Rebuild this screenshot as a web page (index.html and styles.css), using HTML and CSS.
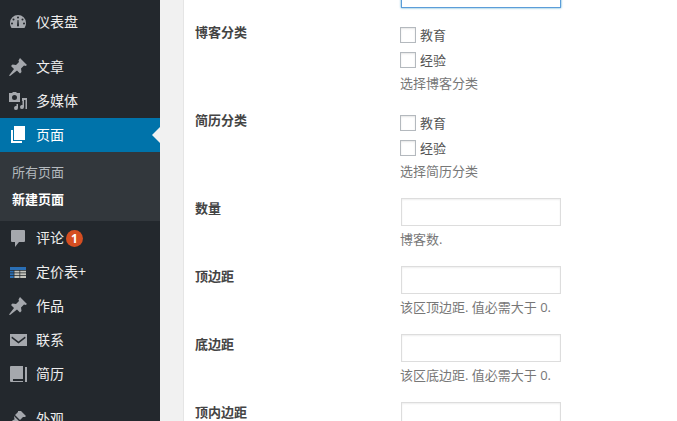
FILE: index.html
```html
<!DOCTYPE html>
<html lang="zh">
<head>
<meta charset="utf-8">
<title>新建页面</title>
<link rel="stylesheet" href="styles.css">
</head>
<body>
<div class="app">
  <nav class="sidebar">
    <a class="item first"><svg class="ico" viewBox="0 0 20 20"><path d="M2 11a8 8 0 0 1 16 0c0 2-.6 3.500-1.500 5h-13C2.600 14.500 2 13 2 11zM10 4.500a1 1 0 1 0 0 2 1 1 0 0 0 0-2zM5.500 6.500a1 1 0 1 0 0 2 1 1 0 0 0 0-2zM14.500 6.500a1 1 0 1 0 0 2 1 1 0 0 0 0-2zM4 10.500a1 1 0 1 0 0 2 1 1 0 0 0 0-2zM16 10.500a1 1 0 1 0 0 2 1 1 0 0 0 0-2zM9.500 8l-.5 5.500a1 1 0 1 0 2 0L10.500 8z" fill-rule="evenodd"/></svg><span>仪表盘</span></a>
    <a class="item gap"><svg class="ico" viewBox="0 0 20 20"><path d="M12 1l7 7-1.500 1-1.500-.5-3 3 .5 3.500-1.500 1.500-3-3L2 19l-1-.500L6 12 3 9l1.500-1.500 3.500.5 3-3-.5-1.500z"/></svg><span>文章</span></a>
    <a class="item"><svg class="ico" viewBox="0 0 20 20"><path d="M1 2h3l1-1h3l1 1h3v9H1zM6.500 4a2.500 2.500 0 1 0 0 5 2.500 2.500 0 0 0 0-5zM14 7h5v11h-1.500V9H16v7a2 2 0 1 1-1.500-1.900V10H14zM10 13v4a2 2 0 1 1-1.500-1.900V13z" fill-rule="evenodd"/></svg><span>多媒体</span></a>
    <a class="item current"><svg class="ico" viewBox="0 0 20 20"><path d="M6 1h11v14H6z"/><path d="M3 5h2v11h9v2H3z"/></svg><span>页面</span></a>
    <div class="submenu">
      <a class="sub">所有页面</a>
      <a class="sub on">新建页面</a>
    </div>
    <a class="item"><svg class="ico" viewBox="0 0 20 20"><path d="M4 2h12a1 1 0 0 1 1 1v10a1 1 0 0 1-1 1h-5l-4 5v-5H4a1 1 0 0 1-1-1V3a1 1 0 0 1 1-1z"/></svg><span>评论</span><b class="badge">1</b></a>
    <a class="item"><svg class="ico" viewBox="0 0 20 20"><path class="table-head" d="M2 5h16v3H2zM2 8h4v8H2z"/><path class="table-cells" d="M6 8h12v8H6z"/><path class="table-lines" d="M2 8h16v.7H2zM2 10.500h16v.7H2zM2 13.200h16v.7H2zM5.700 8h.7v8h-.7zM11.500 8h.7v8h-.7z"/></svg><span>定价表+</span></a>
    <a class="item"><svg class="ico" viewBox="0 0 20 20"><path d="M12 1l7 7-1.500 1-1.500-.5-3 3 .5 3.500-1.500 1.500-3-3L2 19l-1-.500L6 12 3 9l1.500-1.500 3.500.5 3-3-.5-1.500z"/></svg><span>作品</span></a>
    <a class="item"><svg class="ico" viewBox="0 0 20 20"><path d="M2 4h17v12H2zM4 6.500l6.500 5 6.500-5 .6 1.500-7.100 5.500L3.400 8z" fill-rule="evenodd"/></svg><span>联系</span></a>
    <a class="item"><svg class="ico" viewBox="0 0 20 20"><path d="M3 2h12v13H5v2h10v1H3a1 1 0 0 1-1-1V3a1 1 0 0 1 1-1zM17 3h2v15h-2z"/></svg><span>简历</span></a>
    <a class="item gap"><svg class="ico" viewBox="0 0 20 20"><path d="M13 2l5 5-1 1h-2l-3 3-5-5 3-3V2zM6 7l5 5-1.500 1.500L9 15l-2 2-2-1-2 2-1-1 2-2-1-2 2-2 1.500-.5z"/></svg><span>外观</span></a>
  </nav>
  <main class="main">
    <div class="card">
      <div class="row row-top">
        <div class="label"></div>
        <div class="field"><div class="input focus"></div></div>
      </div>
      <div class="row row-check">
        <div class="label">博客分类</div>
        <div class="field">
          <div class="check"><i class="box"></i>教育</div>
          <div class="check"><i class="box"></i>经验</div>
          <div class="hint hint-check">选择博客分类</div>
        </div>
      </div>
      <div class="row row-check">
        <div class="label">简历分类</div>
        <div class="field">
          <div class="check"><i class="box"></i>教育</div>
          <div class="check"><i class="box"></i>经验</div>
          <div class="hint hint-check">选择简历分类</div>
        </div>
      </div>
      <div class="row">
        <div class="label">数量</div>
        <div class="field"><div class="input"></div><div class="hint">博客数.</div></div>
      </div>
      <div class="row">
        <div class="label">顶边距</div>
        <div class="field"><div class="input"></div><div class="hint">该区顶边距. 值必需大于 0.</div></div>
      </div>
      <div class="row">
        <div class="label">底边距</div>
        <div class="field"><div class="input"></div><div class="hint">该区底边距. 值必需大于 0.</div></div>
      </div>
      <div class="row">
        <div class="label">顶内边距</div>
        <div class="field"><div class="input"></div></div>
      </div>
    </div>
  </main>
</div>
</body>
</html>
```

FILE: styles.css
```css
* { box-sizing: border-box; }
html, body { margin: 0; height: 100%; overflow: hidden; }
body { font-family: "Open Sans", "Liberation Sans", "Noto Sans CJK SC", sans-serif; font-size: 13px; background: #f1f1f1; }
.app { display: flex; height: 421px; overflow: hidden; }

.sidebar { width: 160px; flex: none; background: #23282d; color: #eee; font-size: 14px; }
.item { display: flex; align-items: center; height: 34px; padding-left: 8px; position: relative; }
.item.first { margin-top: 5px; }
.item.gap { margin-top: 11px; }
.item span { margin-left: 8px; padding-bottom: 2px; }
.ico { width: 20px; height: 20px; fill: #a5a8ad; flex: none; }
.current { background: #0073aa; color: #fff; }
.current .ico { fill: #fff; }
.current::after { content: ""; position: absolute; right: 0; top: 9px; border: 8px solid transparent; border-right-color: #f1f1f1; }
.submenu { background: #32373c; padding: 7px 0; height: 69px; }
.sub { display: block; padding-left: 12px; height: 27px; line-height: 27px; color: #b4b9be; font-size: 13px; }
.sub.on { color: #fff; font-weight: 600; }
.badge { width: 17px; height: 17px; border-radius: 50%; background: #d54e21; color: #fff; font-size: 12px; line-height: 17px; text-align: center; margin-left: 2px; font-weight: 700; }
.table-head { fill: #2a6fb5; }
.table-cells { fill: #c4c4bc; }
.table-lines { fill: #23282d; }

.main { flex: 1; padding-left: 23px; min-width: 0; }
.card { background: #fff; border-left: 1px solid #e5e5e5; height: 100%; padding-left: 11px; }
.row { display: flex; height: 68px; }
.row-top { height: 22px; }
.row-check { height: 88px; }
.label { width: 205px; flex: none; font-weight: 600; color: #444; font-size: 13px; line-height: 20px; }
.input { width: 160px; height: 28px; margin-left: 1px; background: #fff; border: 1px solid #ddd; box-shadow: inset 0 1px 2px rgba(0,0,0,.07); }
.input.focus { border-color: #5b9dd9; box-shadow: 0 0 2px rgba(30,140,190,.8); margin-top: -20px; }
.row-check .field { padding-top: 5px; }
.check { display: flex; align-items: flex-start; height: 25px; line-height: 16px; color: #555; }
.box { width: 16px; height: 16px; margin-right: 4px; border: 1px solid #b4b9be; background: #fff; box-shadow: inset 0 1px 2px rgba(0,0,0,.1); }
.hint { color: #777; font-size: 13px; line-height: 18px; margin-top: 4px; }
.hint-check { margin-top: -3px; }
```
